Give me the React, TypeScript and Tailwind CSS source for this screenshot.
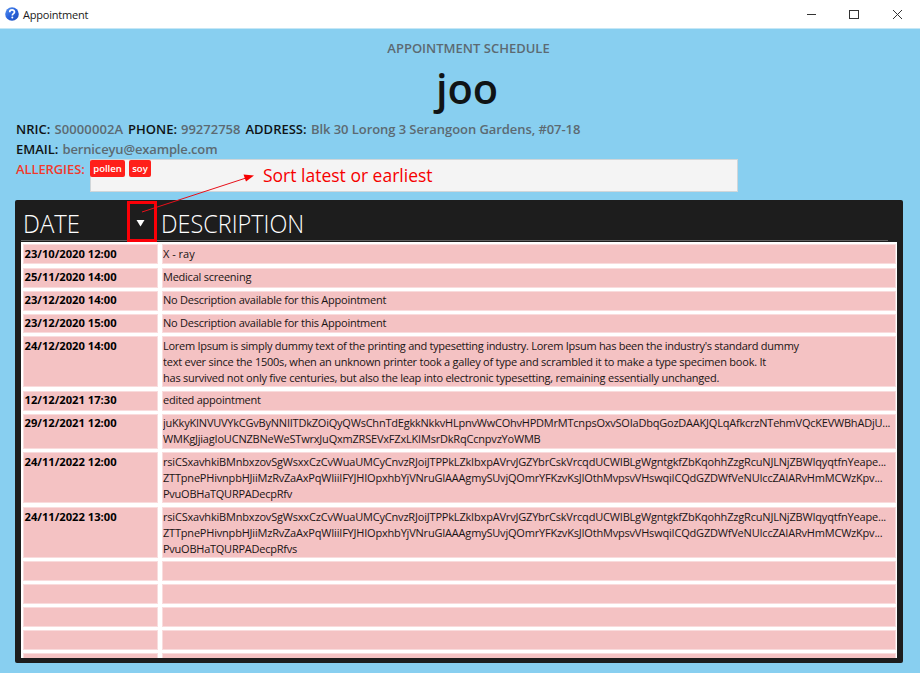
type Line = { text: string; tracking: string };
type Row = { date?: string; lines?: Line[]; size: string; pad?: string };

const short = "h-[20px] mb-[3px]";
const base = "tracking-[-0.24px]";

const rsi: Line = {
  text: "rsiCSxavhkiBMnbxzovSgWsxxCzCvWuaUMCyCnvzRJoiJTPPkLZkIbxpAVrvJGZYbrCskVrcqdUCWIBLgWgntgkfZbKqohhZzgRcuNJLNjZBWIqyqtfnYeape...",
  tracking: "tracking-[-0.185px]",
};
const ztt: Line = {
  text: "ZTTpnePHivnpbHJiiMzRvZaAxPqWIiiIFYJHIOpxhbYjVNruGIAAAgmySUvjQOmrYFKzvKsJIOthMvpsvVHswqiICQdGZDWfVeNUIccZAIARvHmMCWzKpv...",
  tracking: "tracking-[-0.2px]",
};

const rows: Row[] = [
  { date: "23/10/2020 12:00", lines: [{ text: "X - ray", tracking: "tracking-normal" }], size: "h-[20px] mb-[4px]", pad: "pt-px" },
  { date: "25/11/2020 14:00", lines: [{ text: "Medical screening", tracking: base }], size: short },
  { date: "23/12/2020 14:00", lines: [{ text: "No Description available for this Appointment", tracking: base }], size: short },
  { date: "23/12/2020 15:00", lines: [{ text: "No Description available for this Appointment", tracking: base }], size: "h-[19px] mb-[3px]" },
  {
    date: "24/12/2020 14:00",
    lines: [
      { text: "Lorem Ipsum is simply dummy text of the printing and typesetting industry. Lorem Ipsum has been the industry's standard dummy", tracking: "tracking-[-0.275px]" },
      { text: "text ever since the 1500s, when an unknown printer took a galley of type and scrambled it to make a type specimen book. It", tracking: "tracking-[-0.235px]" },
      { text: "has survived not only five centuries, but also the leap into electronic typesetting, remaining essentially unchanged.", tracking: "tracking-[-0.24px]" },
    ],
    size: "h-[51px] mb-[4px]",
    pad: "pt-px",
  },
  { date: "12/12/2021 17:30", lines: [{ text: "edited appointment", tracking: base }], size: short },
  {
    date: "29/12/2021 12:00",
    lines: [
      { text: "juKkyKINVUVYkCGvByNNIITDkZOiQyQWsChnTdEgkkNkkvHLpnvWwCOhvHPDMrMTcnpsOxvSOIaDbqGozDAAKJQLqAfkcrzNTehmVQcKEVWBhADjU...", tracking: "tracking-[-0.22px]" },
      { text: "WMKgJjiagIoUCNZBNeWeSTwrxJuQxmZRSEVxFZxLKIMsrDkRqCcnpvzYoWMB", tracking: "tracking-[-0.2px]" },
    ],
    size: "h-[35px] mb-[3px]",
  },
  { date: "24/11/2022 12:00", lines: [rsi, ztt, { text: "PvuOBHaTQURPADecpRfv", tracking: "tracking-[-0.25px]" }], size: "h-[51px] mb-[4px]", pad: "pt-px" },
  { date: "24/11/2022 13:00", lines: [rsi, ztt, { text: "PvuOBHaTQURPADecpRfvs", tracking: "tracking-[-0.25px]" }], size: "h-[51px] mb-[3px]", pad: "pt-px" },
  { size: short },
  { size: short },
  { size: short },
  { size: short },
  { size: "h-[20px]" },
];

const cell = "shrink-0 overflow-hidden border border-[#f9dcdd] bg-[#f4c2c3]";

function TitleBar() {
  return (
    <header className="flex h-[29px] shrink-0 items-center border-b border-[#c5e7f6] bg-white pl-[5px] text-[#1a1a1a]">
      <svg width="14" height="14" viewBox="0 0 14 14">
        <defs>
          <linearGradient id="ball" x1="0" y1="0" x2="1" y2="1">
            <stop offset="0" stopColor="#5b95ee" />
            <stop offset="0.5" stopColor="#2862dc" />
            <stop offset="1" stopColor="#2350b8" />
          </linearGradient>
        </defs>
        <circle cx="7" cy="7" r="6.8" fill="url(#ball)" />
        <path d="M4.7 5.2c0-3 4.8-2.9 4.8-.2 0 1.7-2.2 1.7-2.2 3.5" fill="none" stroke="#fff" strokeWidth="1.7" />
        <circle cx="7.3" cy="10.6" r="1" fill="#fff" />
      </svg>
      <span className="ml-[4px] pt-[3px] text-[11px] tracking-[-0.2px]">Appointment</span>
      <svg className="ml-auto mr-[17px]" width="97" height="12" viewBox="0 0 97 12" fill="none" stroke="#333" strokeWidth="1">
        <path d="M1 6.5H10" />
        <rect x="43.500" y="2.500" width="9" height="8" />
        <path d="M87 2l9 9M96 2l-9 9" />
      </svg>
    </header>
  );
}

function Tag({ children, width }: { children: string; width: string }) {
  return (
    <span className={`flex h-[17px] items-center justify-center rounded-[2px] bg-[#ff1f1a] text-[9.5px] font-semibold text-white ${width}`}>
      {children}
    </span>
  );
}

function Patient() {
  return (
    <section className="shrink-0 text-[13px] font-semibold leading-[20px] text-[#5c6a72]">
      <h2 className="mt-[9px] pl-[17px] text-center">APPOINTMENT SCHEDULE</h2>
      <h1 className="mt-[-1px] h-[64px] pl-[14px] text-center text-[41.500px] font-semibold leading-[62px] text-[#101416]">joo</h1>
      <div className="mt-[-2px] pl-[16px]">
        <p className="flex whitespace-nowrap">
          <b className="w-[38.500px] font-semibold text-[#101416]">NRIC:</b>
          <span className="w-[73.500px] tracking-[0.1px]">S0000002A</span>
          <b className="w-[53px] font-semibold text-[#101416]">PHONE:</b>
          <span className="w-[64.500px]">99272758</span>
          <b className="w-[65.500px] font-semibold text-[#101416]">ADDRESS:</b>
          <span className="tracking-[-0.070px]">Blk 30 Lorong 3 Serangoon Gardens, #07-18</span>
        </p>
        <p className="flex whitespace-nowrap">
          <b className="w-[46.500px] font-semibold text-[#101416]">EMAIL:</b>
          <span className="tracking-[-0.150px]">berniceyu@example.com</span>
        </p>
        <div className="flex">
          <b className="w-[74px] font-semibold tracking-[-0.1px] text-[#f03b2d]">ALLERGIES:</b>
          <div className="relative flex h-[33px] w-[648px] border border-[#d0d6d9] bg-[#f4f4f4]">
            <div className="-ml-px flex gap-[4px]">
              <Tag width="w-[35px]">pollen</Tag>
              <Tag width="w-[22px]">soy</Tag>
            </div>
            <span className="absolute left-[172px] top-[2px] whitespace-nowrap text-[17.5px] font-normal leading-[26px] text-[#f60000]">
              Sort latest or earliest
            </span>
          </div>
        </div>
      </div>
    </section>
  );
}

function Schedule() {
  return (
    <section className="relative ml-[15px] mt-[8px] flex h-[463px] w-[888px] shrink-0 flex-col rounded-[2px] bg-[#1d1d1d] px-[6px] pb-[5px]">
      <div className="flex h-[42px] shrink-0 flex-col text-[26px] font-light text-white">
        <div className="flex h-[40px] items-center pt-[7px]">
          <div className="w-[140px] pl-[1.500px]">
            <span className="inline-block origin-left scale-x-[0.92]">DATE</span>
          </div>
          <span className="inline-block origin-left scale-x-90">DESCRIPTION</span>
        </div>
        <div className="h-px w-[867px] bg-[#606060]" />
      </div>
      <div className="min-h-0 flex-1 overflow-hidden bg-white pl-[2px] pt-[2px] text-[11px] leading-[16px] text-[#1a1414]">
        {rows.map((row, i) => (
          <div key={i} className={`flex gap-[4px] ${row.size}`}>
            <div className={`w-[135px] pl-[0.500px] text-[11.200px] font-bold text-black ${row.pad ?? ""} ${cell}`}>{row.date}</div>
            <div className={`w-[734px] ${row.pad ?? ""} ${cell}`}>
              {row.lines?.map((l, j) => (
                <p key={j} className={`whitespace-nowrap ${l.tracking}`}>{l.text}</p>
              ))}
            </div>
          </div>
        ))}
      </div>
      <div className="absolute left-[112px] top-px h-[41px] w-[30px] border-[3px] border-[#fb0007]" />
      <svg className="absolute left-[112px] top-[-30px]" width="135" height="72" viewBox="127 170 135 72">
        <path d="M136.500 220h8l-4 6.500z" fill="#fff" />
        <path d="M142 212L246 178" stroke="#e8101a" strokeWidth="1" />
        <path d="M254 175.500l-10.500-.9 2.500 6.800z" fill="#f60000" />
      </svg>
    </section>
  );
}

export default function App() {
  return (
    <div className="flex h-screen w-full flex-col overflow-hidden bg-[#88cff0] font-['Open_Sans','Noto_Sans',sans-serif]">
      <TitleBar />
      <Patient />
      <Schedule />
    </div>
  );
}
